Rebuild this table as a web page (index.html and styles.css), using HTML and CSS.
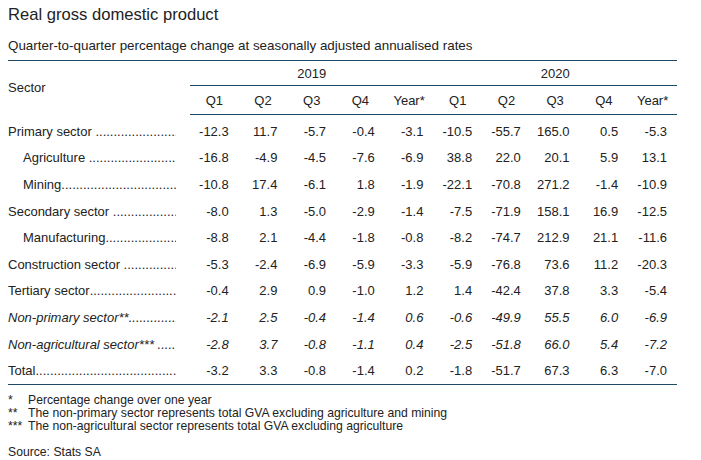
FILE: index.html
```html
<!DOCTYPE html>
<html>
<head>
<meta charset="utf-8">
<link rel="stylesheet" href="styles.css">
</head>
<body>
<div class="page">
  <h1 class="title">Real gross domestic product</h1>
  <p class="subtitle">Quarter-to-quarter percentage change at seasonally adjusted annualised rates</p>
  <table class="gdp">
    <colgroup>
      <col class="col-label">
      <col><col><col><col><col><col><col><col><col><col>
    </colgroup>
    <thead>
      <tr class="year-row">
        <th class="sector-head" rowspan="2">Sector</th>
        <th colspan="5" class="year">2019</th>
        <th colspan="5" class="year">2020</th>
      </tr>
      <tr class="q-row">
        <th>Q1</th><th>Q2</th><th>Q3</th><th>Q4</th><th>Year*</th>
        <th>Q1</th><th>Q2</th><th>Q3</th><th>Q4</th><th>Year*</th>
      </tr>
    </thead>
    <tbody>
      <tr class="first">
        <td class="label"><span class="lead"><span class="name">Primary sector&nbsp;</span><span class="dots"></span></span></td>
        <td>-12.3</td><td>11.7</td><td>-5.7</td><td>-0.4</td><td>-3.1</td><td>-10.5</td><td>-55.7</td><td>165.0</td><td>0.5</td><td>-5.3</td>
      </tr>
      <tr>
        <td class="label sub"><span class="lead"><span class="name">Agriculture&nbsp;</span><span class="dots"></span></span></td>
        <td>-16.8</td><td>-4.9</td><td>-4.5</td><td>-7.6</td><td>-6.9</td><td>38.8</td><td>22.0</td><td>20.1</td><td>5.9</td><td>13.1</td>
      </tr>
      <tr>
        <td class="label sub"><span class="lead"><span class="name">Mining</span><span class="dots"></span></span></td>
        <td>-10.8</td><td>17.4</td><td>-6.1</td><td>1.8</td><td>-1.9</td><td>-22.1</td><td>-70.8</td><td>271.2</td><td>-1.4</td><td>-10.9</td>
      </tr>
      <tr>
        <td class="label"><span class="lead"><span class="name">Secondary sector&nbsp;</span><span class="dots"></span></span></td>
        <td>-8.0</td><td>1.3</td><td>-5.0</td><td>-2.9</td><td>-1.4</td><td>-7.5</td><td>-71.9</td><td>158.1</td><td>16.9</td><td>-12.5</td>
      </tr>
      <tr>
        <td class="label sub"><span class="lead"><span class="name">Manufacturing</span><span class="dots"></span></span></td>
        <td>-8.8</td><td>2.1</td><td>-4.4</td><td>-1.8</td><td>-0.8</td><td>-8.2</td><td>-74.7</td><td>212.9</td><td>21.1</td><td>-11.6</td>
      </tr>
      <tr>
        <td class="label"><span class="lead"><span class="name">Construction sector&nbsp;</span><span class="dots"></span></span></td>
        <td>-5.3</td><td>-2.4</td><td>-6.9</td><td>-5.9</td><td>-3.3</td><td>-5.9</td><td>-76.8</td><td>73.6</td><td>11.2</td><td>-20.3</td>
      </tr>
      <tr>
        <td class="label"><span class="lead"><span class="name">Tertiary sector</span><span class="dots"></span></span></td>
        <td>-0.4</td><td>2.9</td><td>0.9</td><td>-1.0</td><td>1.2</td><td>1.4</td><td>-42.4</td><td>37.8</td><td>3.3</td><td>-5.4</td>
      </tr>
      <tr class="italic">
        <td class="label"><span class="lead"><span class="name">Non-primary sector**</span><span class="dots"></span></span></td>
        <td>-2.1</td><td>2.5</td><td>-0.4</td><td>-1.4</td><td>0.6</td><td>-0.6</td><td>-49.9</td><td>55.5</td><td>6.0</td><td>-6.9</td>
      </tr>
      <tr class="italic">
        <td class="label"><span class="lead"><span class="name">Non-agricultural sector***&nbsp;</span><span class="dots"></span></span></td>
        <td>-2.8</td><td>3.7</td><td>-0.8</td><td>-1.1</td><td>0.4</td><td>-2.5</td><td>-51.8</td><td>66.0</td><td>5.4</td><td>-7.2</td>
      </tr>
      <tr class="last">
        <td class="label"><span class="lead"><span class="name">Total</span><span class="dots"></span></span></td>
        <td>-3.2</td><td>3.3</td><td>-0.8</td><td>-1.4</td><td>0.2</td><td>-1.8</td><td>-51.7</td><td>67.3</td><td>6.3</td><td>-7.0</td>
      </tr>
    </tbody>
  </table>
  <ul class="notes">
    <li><span class="mark">*</span><span>Percentage change over one year</span></li>
    <li><span class="mark">**</span><span>The non-primary sector represents total GVA excluding agriculture and mining</span></li>
    <li><span class="mark">***</span><span>The non-agricultural sector represents total GVA excluding agriculture</span></li>
  </ul>
  <p class="source">Source: Stats SA</p>
</div>
</body>
</html>
```
FILE: styles.css
```css
html, body {
  margin: 0;
  padding: 0;
  background: #ffffff;
}
body {
  font-family: "Liberation Sans", Arial, sans-serif;
  color: #222222;
}
.page {
  padding: 6px 0 0 8px;
  width: 669px;
}
.title {
  margin: 0;
  font-size: 16.6px;
  font-weight: normal;
  line-height: 18px;
}
.subtitle {
  margin: 14px 0 0 0;
  font-size: 13.4px;
  line-height: 16px;
}
.gdp {
  margin-top: 6px;
  width: 669px;
  table-layout: fixed;
  border-collapse: collapse;
  font-size: 13px;
}
.gdp col.col-label {
  width: 182px;
}
.gdp thead tr.year-row {
  border-top: 1px solid #1d4a66;
}
.gdp th {
  font-weight: normal;
  padding: 0;
  text-align: center;
}
.gdp .year-row th {
  height: 24px;
}
.gdp th.year {
  border-bottom: 1px solid #1d4a66;
}
.gdp .q-row th {
  height: 28px;
  border-bottom: 1px solid #1d4a66;
}
.gdp th.sector-head {
  text-align: left;
  vertical-align: middle;
}
.gdp td {
  padding: 0 10px 0 0;
  text-align: right;
  height: 26.6px;
  white-space: nowrap;
}
.gdp tbody tr.first td {
  padding-top: 3px;
}
.gdp tbody tr.last {
  border-bottom: 1px solid #1d4a66;
}
.gdp td.label {
  text-align: left;
  padding: 0 14px 0 0;
}
.gdp tbody tr.first td.label {
  padding-top: 3px;
}
.gdp td.label.sub {
  padding-left: 15px;
}
.lead {
  display: flex;
  overflow: hidden;
}
.lead .name {
  flex: none;
}
.lead .dots {
  flex: 1;
  overflow: hidden;
  white-space: nowrap;
}
.lead .dots::after {
  content: "...................................................................................";
}
.gdp tr.italic td {
  font-style: italic;
}
.notes {
  list-style: none;
  margin: 9px 0 0 0;
  padding: 0;
  font-size: 12.2px;
  line-height: 13px;
}
.notes li {
  display: flex;
}
.notes .mark {
  width: 20px;
  flex: none;
}
.source {
  margin: 13px 0 0 0;
  font-size: 12.2px;
  line-height: 13px;
}
```
